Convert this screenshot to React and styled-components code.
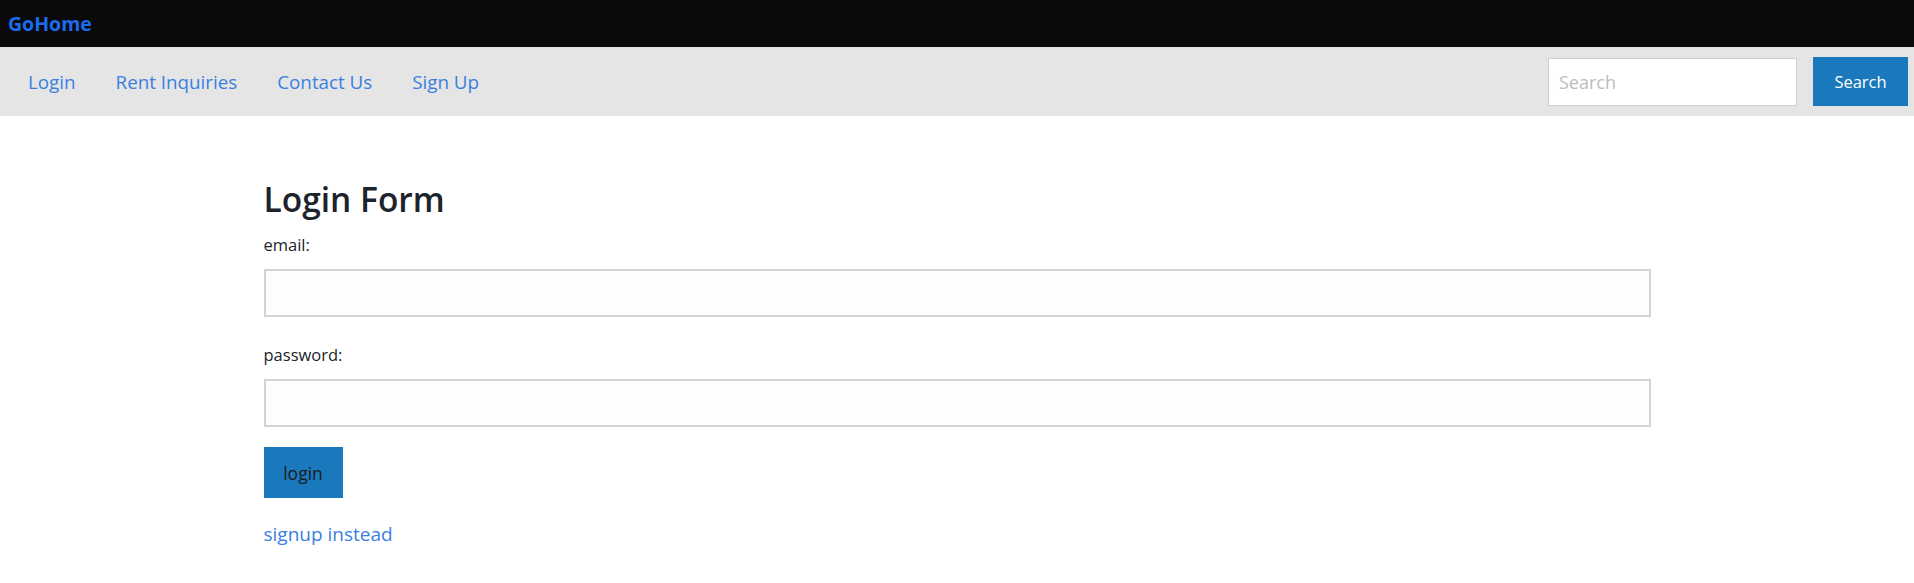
import React from 'react';
import styled, { createGlobalStyle } from 'styled-components';

const GlobalStyle = createGlobalStyle`
  body {
    margin: 0;
    background: #fff;
    font-family: "Open Sans", "Noto Sans", sans-serif;
    color: #212529;
  }
`;

const TopBar = styled.div`
  height: 47px;
  background: #0a0a0a;
  display: flex;
  align-items: center;
  padding-left: 8px;
`;

const Brand = styled.a`
  color: #1a6cf0;
  font-weight: 700;
  font-size: 19.5px;
  text-decoration: none;
`;

const NavBar = styled.nav`
  height: 69px;
  background: #e5e5e5;
  display: flex;
  align-items: center;
  justify-content: space-between;
  padding: 0 6px 0 8px;
`;

const NavLinks = styled.div`
  display: flex;
`;

const NavLink = styled.a`
  color: #3a7fe0;
  font-size: 18.8px;
  padding: 0 20px;
  text-decoration: none;
`;

const SearchForm = styled.form`
  display: flex;
  align-items: center;
  gap: 16px;
`;

const SearchInput = styled.input`
  width: 249px;
  height: 48px;
  box-sizing: border-box;
  border: 1px solid #cfcfcf;
  background: #fff;
  font-family: inherit;
  font-size: 18px;
  padding: 0 10px;
  &::placeholder {
    color: #bdbdbd;
  }
`;

const BlueButton = styled.button`
  background: #1a78bd;
  border: none;
  font-family: inherit;
  font-size: ${(p) => (p.$light ? 16.5 : 17.5)}px;
  color: ${(p) => (p.$light ? '#fff' : '#1c1c1c')};
  width: ${(p) => p.$w}px;
  height: ${(p) => p.$h}px;
  padding: 0;
`;

const Container = styled.main`
  width: 1387px;
  margin: 0 auto;
  padding-top: 61px;
`;

const Title = styled.h1`
  margin: 0 0 14px;
  font-size: 33.5px;
  font-weight: 600;
  line-height: 44px;
  color: #1d232a;
`;

const Label = styled.label`
  display: block;
  font-size: 16.5px;
  line-height: 20px;
  margin-bottom: 14px;
`;

const Field = styled.input`
  display: block;
  width: 100%;
  height: 48px;
  box-sizing: border-box;
  border: 2px solid #d3d3d3;
  background: #fdfdfd;
  margin-bottom: ${(p) => p.$gap}px;
`;

const SwitchLink = styled.a`
  display: inline-block;
  margin-top: 23px;
  color: #3a7fe0;
  font-size: 19px;
  text-decoration: none;
`;

export default function App() {
  return (
    <>
      <GlobalStyle />
      <TopBar>
        <Brand href="#">GoHome</Brand>
      </TopBar>
      <NavBar>
        <NavLinks>
          <NavLink href="#">Login</NavLink>
          <NavLink href="#">Rent Inquiries</NavLink>
          <NavLink href="#">Contact Us</NavLink>
          <NavLink href="#">Sign Up</NavLink>
        </NavLinks>
        <SearchForm onSubmit={(e) => e.preventDefault()}>
          <SearchInput placeholder="Search" />
          <BlueButton $light $w={95} $h={49}>Search</BlueButton>
        </SearchForm>
      </NavBar>
      <Container>
        <Title>Login Form</Title>
        <Label>email:</Label>
        <Field type="email" $gap={28} />
        <Label>password:</Label>
        <Field type="password" $gap={20} />
        <BlueButton $w={79} $h={51}>login</BlueButton>
        <div>
          <SwitchLink href="#">signup instead</SwitchLink>
        </div>
      </Container>
    </>
  );
}
